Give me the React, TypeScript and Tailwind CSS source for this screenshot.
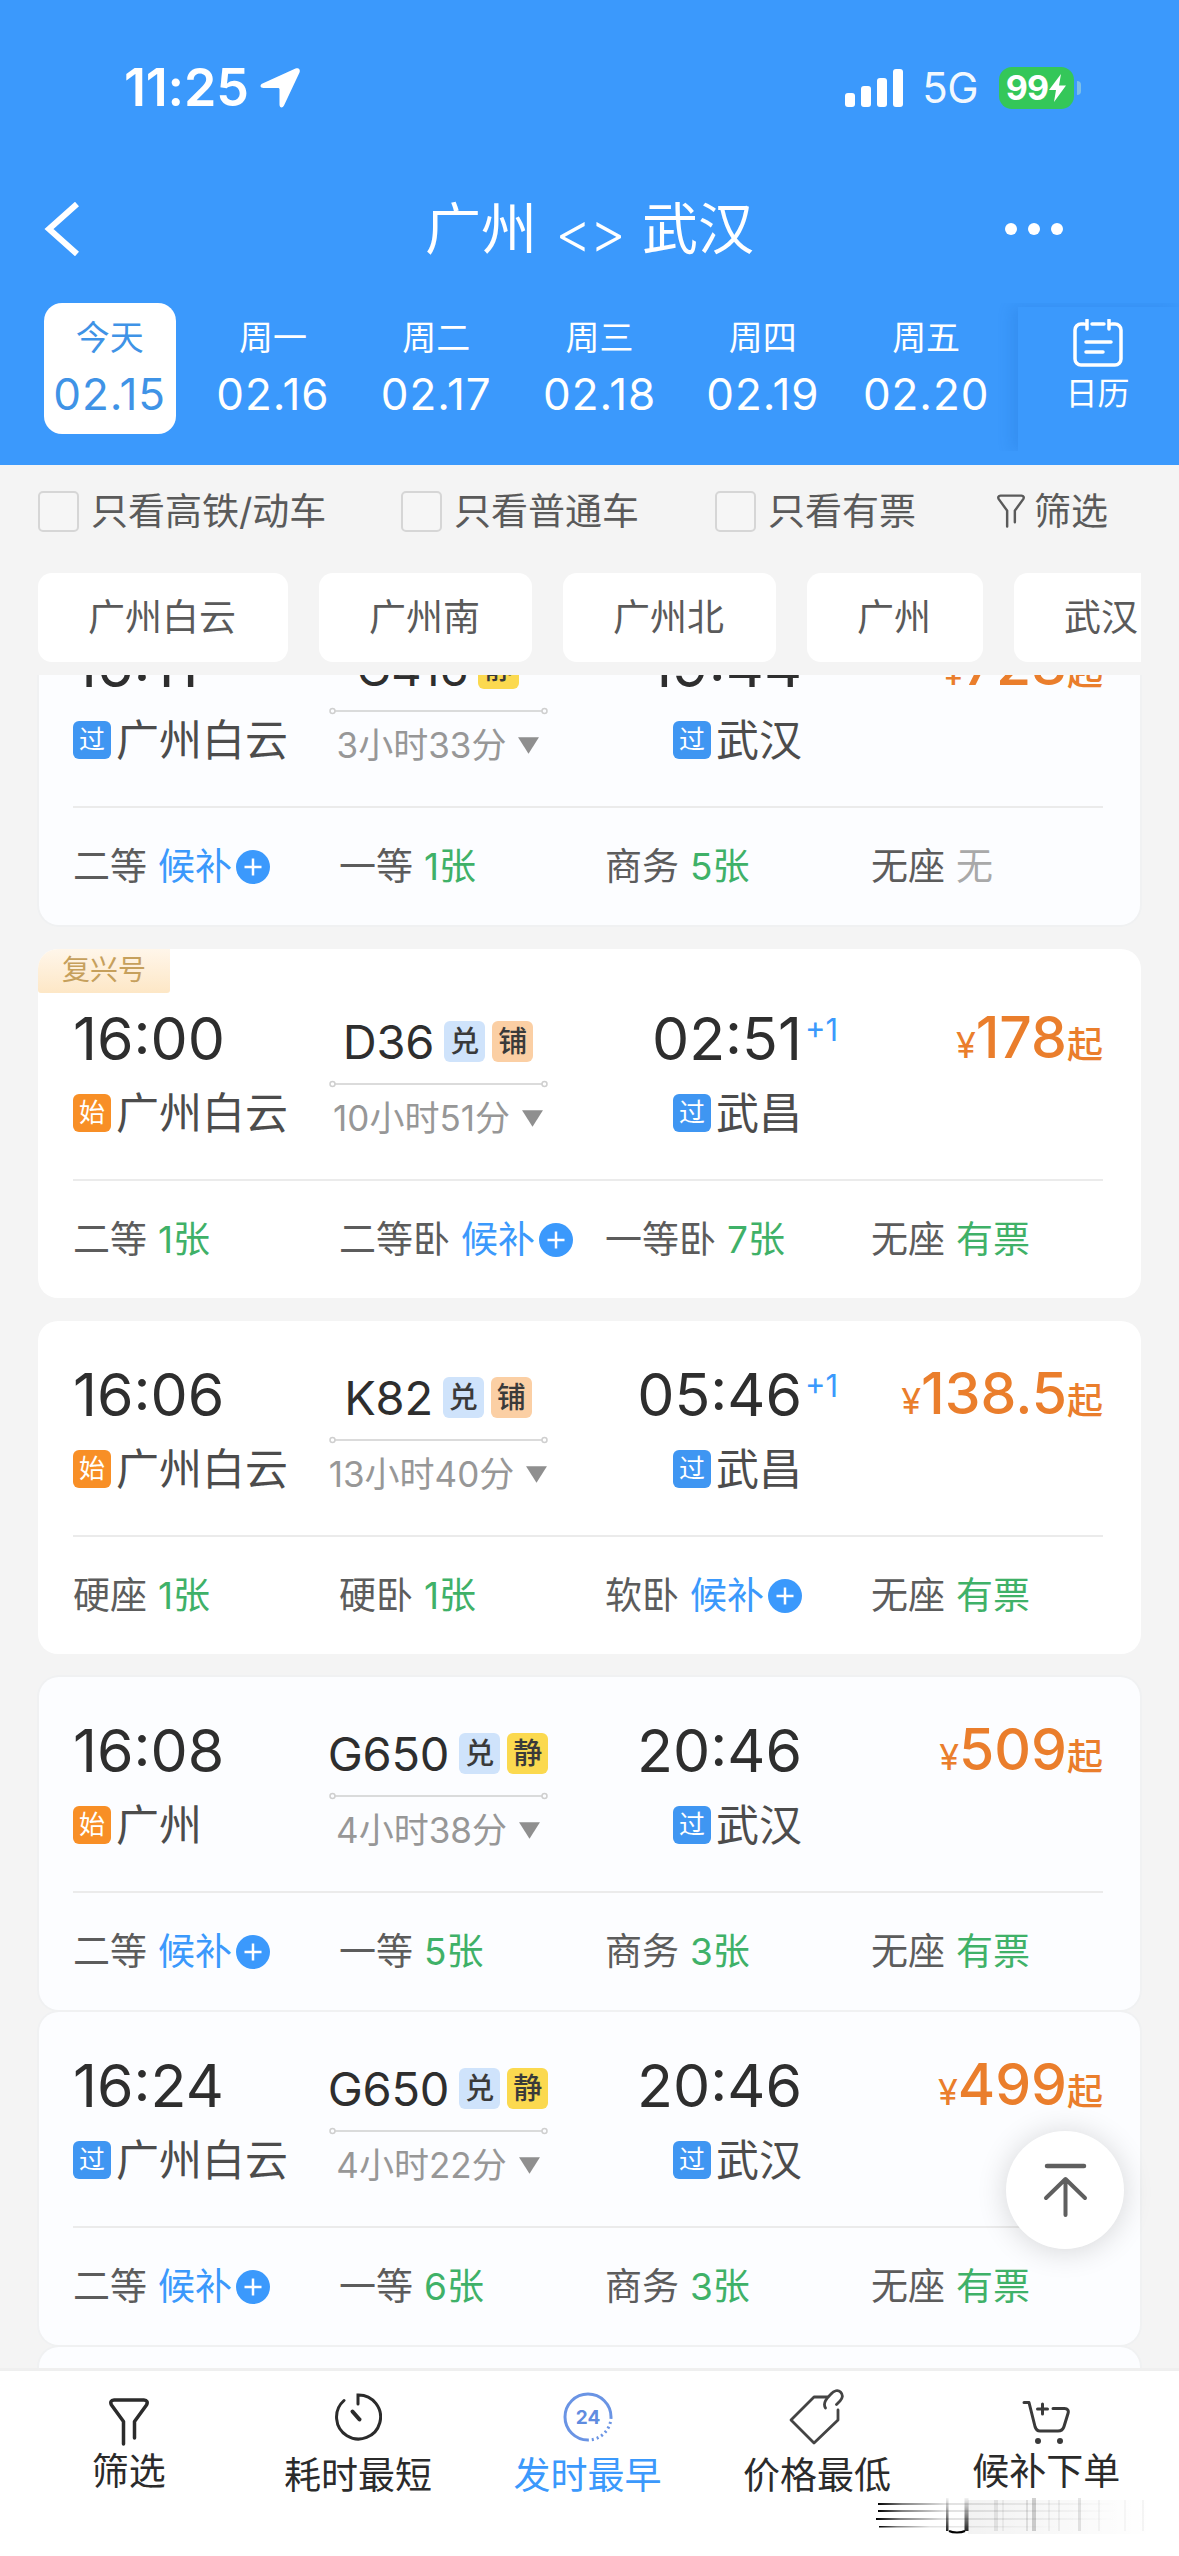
import type { ReactNode } from "react";
import clsx from "clsx";

type Tag = "兑" | "铺" | "静";

type Seat = { name: string; value: string };

type Train = {
  id: string;
  depart: string;
  arrive: string;
  nextDay?: boolean;
  from: string;
  to: string;
  origin?: boolean;
  code: string;
  tags: Tag[];
  duration: string;
  price: string;
  badge?: string;
  tinted?: boolean;
  gap: string;
  seats: Seat[];
};

const DATES = [
  { day: "今天", date: "02.15" },
  { day: "周一", date: "02.16" },
  { day: "周二", date: "02.17" },
  { day: "周三", date: "02.18" },
  { day: "周四", date: "02.19" },
  { day: "周五", date: "02.20" },
];

const STATIONS = ["广州白云", "广州南", "广州北", "广州", "武汉"];

const TRAINS: Train[] = [
  {
    id: "1",
    depart: "16:11",
    arrive: "19:44",
    from: "广州白云",
    to: "武汉",
    code: "G416",
    tags: ["静"],
    duration: "3小时33分",
    price: "728",
    tinted: true,
    gap: "-mt-[83px]",
    seats: [
      { name: "二等", value: "候补" },
      { name: "一等", value: "1张" },
      { name: "商务", value: "5张" },
      { name: "无座", value: "无" },
    ],
  },
  {
    id: "2",
    depart: "16:00",
    arrive: "02:51",
    nextDay: true,
    from: "广州白云",
    to: "武昌",
    origin: true,
    code: "D36",
    tags: ["兑", "铺"],
    duration: "10小时51分",
    price: "178",
    badge: "复兴号",
    gap: "mt-6",
    seats: [
      { name: "二等", value: "1张" },
      { name: "二等卧", value: "候补" },
      { name: "一等卧", value: "7张" },
      { name: "无座", value: "有票" },
    ],
  },
  {
    id: "3",
    depart: "16:06",
    arrive: "05:46",
    nextDay: true,
    from: "广州白云",
    to: "武昌",
    origin: true,
    code: "K82",
    tags: ["兑", "铺"],
    duration: "13小时40分",
    price: "138.5",
    gap: "mt-[23px]",
    seats: [
      { name: "硬座", value: "1张" },
      { name: "硬卧", value: "1张" },
      { name: "软卧", value: "候补" },
      { name: "无座", value: "有票" },
    ],
  },
  {
    id: "4",
    depart: "16:08",
    arrive: "20:46",
    from: "广州",
    to: "武汉",
    origin: true,
    code: "G650",
    tags: ["兑", "静"],
    duration: "4小时38分",
    price: "509",
    tinted: true,
    gap: "mt-[23px]",
    seats: [
      { name: "二等", value: "候补" },
      { name: "一等", value: "5张" },
      { name: "商务", value: "3张" },
      { name: "无座", value: "有票" },
    ],
  },
  {
    id: "5",
    depart: "16:24",
    arrive: "20:46",
    from: "广州白云",
    to: "武汉",
    code: "G650",
    tags: ["兑", "静"],
    duration: "4小时22分",
    price: "499",
    tinted: true,
    gap: "mt-0.5",
    seats: [
      { name: "二等", value: "候补" },
      { name: "一等", value: "6张" },
      { name: "商务", value: "3张" },
      { name: "无座", value: "有票" },
    ],
  },
];

const TAG_STYLES: Record<Tag, string> = {
  兑: "bg-[#cfe3fb]",
  铺: "bg-[#fbcfa4]",
  静: "bg-[#fbd94f]",
};

export default function App() {
  return (
    <div className="flex h-[2556px] w-[1179px] flex-col overflow-hidden bg-[#f4f4f4] font-['Inter','Noto_Sans_CJK_SC',sans-serif] leading-none">
      <header className="h-[465px] shrink-0 bg-[#3b99fc] text-white">
        <StatusBar />
        <TitleBar />
        <DateStrip />
      </header>
      <Filters />
      <main className="relative min-h-0 flex-1 overflow-hidden">
        <div className="px-[38px]">
          {TRAINS.map((train) => (
            <TrainCard key={train.id} train={train} />
          ))}
          <div className="mx-px mt-0.5 h-20 rounded-[20px] bg-[#fcfdff] ring-2 ring-[#f0f1f2]" />
        </div>
        <button className="absolute right-[55px] bottom-[119px] flex h-[118px] w-[118px] items-center justify-center rounded-full bg-white shadow-[0_2px_30px_rgba(0,0,0,0.16)]">
          <svg width="50" height="58" viewBox="0 0 50 58" fill="none" stroke="#5f5f5f" strokeWidth="4" strokeLinecap="round" strokeLinejoin="round">
            <path d="M7 5h37" strokeWidth="4.5" />
            <path d="M25.5 54V19M6 37L25.5 18 45 37" />
          </svg>
        </button>
      </main>
      <SortBar />
    </div>
  );
}

function StatusBar() {
  return (
    <div className="flex h-[176px] items-center pr-[98px] pl-[124px]">
      <span className="text-[52px] font-semibold tracking-[-0.2px]">11:25</span>
      <svg className="ml-2.5" width="42" height="42" viewBox="0 0 42 42">
        <path d="M39.5 1.5C41 2.5 41 4 40.5 5.500L25 38.500c-1.500 3-4.500 2.500-4.500-1V22.500c0-1-.5-1.500-1.500-1.500H4.500C1 21 .5 18 3.500 16.500L36.500 1.500c1-.5 2-.5 3 0z" fill="#fff" />
      </svg>
      <svg className="ml-auto" width="58" height="38" viewBox="0 0 58 38" fill="#fff">
        <rect x="0" y="24" width="10" height="14" rx="3" />
        <rect x="16" y="17" width="10" height="21" rx="3" />
        <rect x="32" y="9" width="10" height="29" rx="3" />
        <rect x="48" y="0" width="10" height="38" rx="3" />
      </svg>
      <span className="ml-[19px] text-[42px] tracking-[-0.5px] text-white/95">5G</span>
      <div className="ml-[21px] flex h-[42px] w-[75px] items-center justify-center rounded-[13px] bg-[#34c759]">
        <span className="text-[34px] font-bold tracking-tight">99</span>
        <svg width="19" height="28" viewBox="0 0 19 28">
          <path d="M13 0L1 16h7L6 28 18 11.500h-7z" fill="#fff" />
        </svg>
      </div>
      <span className="ml-[3px] h-3.5 w-1 rounded-r-full bg-[#7cc0e8]" />
    </div>
  );
}

function TitleBar() {
  return (
    <div className="flex h-[106px] items-center">
      <div className="w-[200px] pl-[44px]">
        <svg width="36" height="54" viewBox="0 0 36 54" fill="none" stroke="#fff" strokeWidth="6">
          <path d="M33 2L5 27l28 25" />
        </svg>
      </div>
      <h1 className="flex flex-1 items-center justify-center gap-[18px] text-[56px]">
        <span>广州</span>
        <span className="pt-2 text-[56px] font-light tracking-[-2px]">&lt;&gt;</span>
        <span>武汉</span>
      </h1>
      <div className="flex w-[200px] gap-[11px] pl-[26px]">
        <i className="size-3 rounded-full bg-white" />
        <i className="size-3 rounded-full bg-white" />
        <i className="size-3 rounded-full bg-white" />
      </div>
    </div>
  );
}

function DateStrip() {
  return (
    <div className="mt-[21px] flex h-[148px] overflow-hidden pl-7">
      {DATES.map(({ day, date }, i) => (
        <div key={date} className="flex w-[163.3px] shrink-0 justify-center">
          <div
            className={clsx(
              "flex h-[131px] w-[132px] flex-col items-center rounded-[18px] pt-[18px]",
              i === 0 && "bg-white text-[#3f93e6]",
            )}
          >
            <span className="text-[34px] leading-[34px]">{day}</span>
            <span className="mt-[17px] text-[44px] leading-[44px] tracking-[0.9px]">{date}</span>
          </div>
        </div>
      ))}
      <div className="mt-1 ml-[10px] flex flex-1 flex-col items-center bg-[#3b99fc] pt-3 shadow-[-6px_0_14px_rgba(20,90,180,0.16)]">
        <svg width="50" height="48" viewBox="0 0 50 48" fill="none" stroke="#fff" strokeWidth="3.5" strokeLinecap="round">
          <path d="M11 5H8a6 6 0 0 0-6 6v29a6 6 0 0 0 6 6h34a6 6 0 0 0 6-6V11a6 6 0 0 0-6-6h-3M19 5h12M14 1v9M36 1v9M13 23h25M13 33h17" />
        </svg>
        <span className="mt-[11px] pr-0.5 text-[32px]">日历</span>
      </div>
    </div>
  );
}

function Filters() {
  return (
    <section className="h-[210px] shrink-0 text-[37px] text-[#5a5a5a]">
      <div className="flex h-[92px] items-center pl-[38px]">
        <Check label="只看高铁/动车" className="w-[363px]" />
        <Check label="只看普通车" className="w-[314px]" />
        <Check label="只看有票" className="w-[282px]" />
        <Funnel className="h-[34px] w-[28px]" />
        <span className="ml-[9px]">筛选</span>
      </div>
      <div className="mt-4 ml-[38px] flex w-[1103px] gap-[31px] overflow-hidden">
        {STATIONS.map((name) => (
          <span key={name} className="flex h-[89px] shrink-0 items-center rounded-[14px] bg-white pr-[52px] pl-[50px] whitespace-nowrap">
            {name}
          </span>
        ))}
      </div>
    </section>
  );
}

function Check({ label, className }: { label: string; className: string }) {
  return (
    <label className={clsx("flex shrink-0 items-center gap-3 whitespace-nowrap", className)}>
      <span className="size-[41px] rounded-[5px] border-2 border-[#d6d6d6] bg-[#f6f6f6]" />
      {label}
    </label>
  );
}

function Funnel({ className }: { className: string }) {
  return (
    <svg className={className} viewBox="0 0 40 48" fill="none" stroke="currentColor" strokeWidth="3.5" strokeLinecap="round" strokeLinejoin="round">
      <path d="M14.5 46V23.500L2.500 7C1 4.500 2 2 5 2h30c3 0 4 2.500 2.500 5L25.500 23.500V40" />
    </svg>
  );
}

/* ------------------------------------------------------------------ */
/*  Train list                                                         */
/* ------------------------------------------------------------------ */

function TrainCard({ train }: { train: Train }) {
  return (
    <article
      className={clsx(
        "overflow-hidden rounded-[20px]",
        train.gap,
        train.tinted ? "mx-px bg-[#fcfdff] pr-[37px] pl-[34px] ring-2 ring-[#f0f1f2]" : "bg-white pr-[38px] pl-[35px]",
      )}
    >
      {train.badge ? (
        <div className="-ml-[35px] flex h-11 w-[132px] items-center justify-center rounded-b-[3px] bg-linear-to-b from-[#fff6ea] to-[#fde7c6] pb-0.5 text-[28px] text-[#c6a05c]">
          {train.badge}
        </div>
      ) : null}
      <div className={clsx("flex h-[170px]", train.badge ? "mt-4" : "mt-11")}>
        <div className="w-[257px] shrink-0 whitespace-nowrap">
          <div className="text-[59px] leading-[60px] text-[#2e2e2e]">{train.depart}</div>
          <Station name={train.from} origin={train.origin} />
        </div>
        <div className="flex w-[219px] shrink-0 flex-col items-center whitespace-nowrap">
          <div className="mt-2.5 flex h-11 items-center pr-[3px]">
            <span className="mr-2.5 text-[47px] tracking-[-0.2px] text-[#2e2e2e]">{train.code}</span>
            <span className="flex gap-[7px]">
              {train.tags.map((tag) => (
                <span
                  key={tag}
                  className={clsx(
                    "flex size-[41px] items-center justify-center rounded-md text-[29px] font-medium text-[#3a3a3a]",
                    TAG_STYLES[tag],
                  )}
                >
                  {tag}
                </span>
              ))}
            </span>
          </div>
          <svg className="mt-[17px] -ml-0.5 shrink-0" width="219" height="8" viewBox="0 0 219 8" fill="none" stroke="#cfcfcf" strokeWidth="1.5">
            <circle cx="3.5" cy="4" r="2.5" />
            <circle cx="215.5" cy="4" r="2.5" />
            <path d="M6 4h207" />
          </svg>
          <div className="mt-3 flex h-9 items-center gap-[11px] pr-0.5 text-[35px] text-[#979797]">
            {train.duration}
            <svg width="23" height="17" viewBox="0 0 22 16">
              <path d="M1 0h20L11 16z" fill="#8f8f8f" />
            </svg>
          </div>
        </div>
        <div className="flex w-[253px] shrink-0 flex-col items-end whitespace-nowrap">
          <div className="relative text-[59px] leading-[60px] text-[#2e2e2e]">
            {train.arrive}
            {train.nextDay ? (
              <sup className="absolute top-[5px] left-full ml-[3px] text-[31px] leading-[31px] text-[#3b99fc]">+1</sup>
            ) : null}
          </div>
          <Station name={train.to} />
        </div>
        <div className="flex flex-1 items-baseline justify-end pt-px text-[#ea7e2c]">
          <span className="text-[36px]">¥</span>
          <span className="text-[57px] leading-[56px] font-medium">{train.price}</span>
          <span className="text-[36px] font-medium">起</span>
        </div>
      </div>
      <div className="h-0.5 bg-[#ebebeb]" />
      <div className="flex h-[117px] items-center text-[37px] whitespace-nowrap">
        {train.seats.map((seat) => (
          <SeatCell key={seat.name} seat={seat} />
        ))}
      </div>
    </article>
  );
}

function Station({ name, origin }: { name: string; origin?: boolean }) {
  return (
    <div className="mt-[22px] flex h-11 items-center text-[43px] text-[#4c4c4c]">
      <span
        className={clsx(
          "mr-[5px] flex size-[38px] items-center justify-center rounded-md text-[26px] text-white",
          origin ? "bg-[#f88f26]" : "bg-[#3f96f2]",
        )}
      >
        {origin ? "始" : "过"}
      </span>
      {name}
    </div>
  );
}

function SeatCell({ seat }: { seat: Seat }) {
  const waitlist = seat.value === "候补";
  return (
    <div className="flex w-[266px] shrink-0 items-center text-[#5c5c5c]">
      {seat.name}
      <span
        className={clsx(
          "ml-[11px]",
          waitlist && "text-[#3b99fc]",
          seat.value === "无" && "text-[#a9a9a9]",
          !waitlist && seat.value !== "无" && "text-[#3fb168]",
        )}
      >
        {seat.value}
      </span>
      {waitlist ? (
        <svg className="ml-1" width="34" height="34" viewBox="0 0 34 34">
          <circle cx="17" cy="17" r="17" fill="#3b99fc" />
          <path d="M17 8.500v17M8.500 17h17" stroke="#fff" strokeWidth="2.5" />
        </svg>
      ) : null}
    </div>
  );
}

/* ------------------------------------------------------------------ */
/*  Bottom sort bar                                                    */
/* ------------------------------------------------------------------ */

function SortBar() {
  return (
    <footer className="h-[188px] shrink-0 border-t-[3px] border-[#efefef] bg-white">
      <nav className="flex h-[127px] pr-[18px] pl-3.5 text-[37px] text-[#2b2b2b]">
        <SortItem label="筛选" raised>
          <Funnel className="h-[48px] w-10" />
        </SortItem>
        <SortItem label="耗时最短">
          <svg width="48" height="52" viewBox="0 0 48 52" fill="none" stroke="currentColor" strokeWidth="3" strokeLinecap="round">
            <path d="M24 13V4a22 22 0 1 1-14 5.500" />
            <path d="M18.500 20.500l7 8" strokeWidth="4" />
          </svg>
        </SortItem>
        <SortItem label="发时最早" active>
          <svg width="50" height="50" viewBox="0 0 50 50" fill="none" stroke="#6a94e4" strokeWidth="3">
            <path d="M25 48A23 23 0 1 1 48 25" />
            <path d="M48 25A23 23 0 0 1 25 48" strokeDasharray="2 3" />
            <text x="25" y="32" textAnchor="middle" fontSize="19" fontWeight="700" fill="#5f8ce0" stroke="none">
              24
            </text>
          </svg>
        </SortItem>
        <SortItem label="价格最低">
          <svg width="56" height="56" viewBox="0 0 56 56" fill="none" stroke="#444" strokeWidth="2.8" strokeLinecap="round" strokeLinejoin="round">
            <path d="M38 8H25L2 31l23 23 24-23V21" />
            <path d="M36.500 19c-3-5 1-9.500 5.500-14 3-3.500 7-4.500 9.500-2 3 3 2 6.500-.5 9l-3.500 3.500" />
          </svg>
        </SortItem>
        <SortItem label="候补下单" raised>
          <svg width="48" height="46" viewBox="0 0 48 46" fill="none" stroke="#3a3a3a" strokeWidth="3" strokeLinecap="round" strokeLinejoin="round">
            <path d="M2 2.500h5l6 24c1 3.500 2.500 4.500 5 4.500h18c3 0 5-1 6-4.500l4-13c1-3-.5-5-3.500-5H31M20.500 4v10M15.500 9h10" />
            <circle cx="16" cy="41" r="3" fill="#3a3a3a" stroke="none" />
            <circle cx="38" cy="41" r="3" fill="#3a3a3a" stroke="none" />
          </svg>
        </SortItem>
      </nav>
      <Streaks />
    </footer>
  );
}

function SortItem({
  label,
  active,
  raised,
  children,
}: {
  label: string;
  active?: boolean;
  raised?: boolean;
  children: ReactNode;
}) {
  return (
    <div className={clsx("flex flex-1 flex-col items-center", active && "text-[#3b99fc]", raised ? "pt-1" : "pt-2")}>
      <span className={clsx("flex h-[77px] justify-center", raised ? "items-end pb-1.5" : "items-center pb-0.5")}>{children}</span>
      <span className="leading-[40px]">{label}</span>
    </div>
  );
}

function Streaks() {
  return (
    <svg className="ml-[876px]" width="280" height="38" viewBox="0 0 280 38">
      <defs>
        <linearGradient id="fadeX">
          <stop offset="0" stopColor="#000" />
          <stop offset="0.1" stopColor="#000" stopOpacity="0.5" />
          <stop offset="0.28" stopColor="#000" stopOpacity="0.12" />
          <stop offset="1" stopColor="#000" stopOpacity="0" />
        </linearGradient>
        <linearGradient id="fadeY" x1="0" y1="0" x2="0" y2="1">
          <stop offset="0" stopColor="#000" stopOpacity="0.05" />
          <stop offset="1" stopColor="#000" stopOpacity="0.85" />
        </linearGradient>
        <linearGradient id="wash">
          <stop offset="0" stopColor="#000" stopOpacity="0.05" />
          <stop offset="1" stopColor="#000" stopOpacity="0" />
        </linearGradient>
      </defs>
      <rect x="92" y="2" width="185" height="34" fill="url(#wash)" />
      <g fill="url(#fadeX)">
        <rect x="2" y="5" width="240" height="2" />
        <rect x="2" y="12" width="240" height="2" />
        <rect x="0" y="20" width="240" height="2" />
        <rect x="3" y="28" width="180" height="1.5" />
      </g>
      <rect x="70" y="0" width="2.5" height="33" fill="url(#fadeY)" />
      <rect x="88.5" y="0" width="4" height="33" fill="url(#fadeY)" />
      <path d="M73 33c4 2 12 2 16 0" stroke="#000" strokeWidth="2" fill="none" />
      <g fill="#000">
        <rect x="118" y="2" width="4" height="31" opacity="0.08" />
        <rect x="126" y="2" width="2" height="31" opacity="0.05" />
        <rect x="150" y="2" width="2" height="31" opacity="0.1" />
        <rect x="156" y="0" width="4" height="33" opacity="0.18" />
        <rect x="172" y="2" width="2" height="31" opacity="0.05" />
        <rect x="182" y="2" width="2" height="31" opacity="0.06" />
        <rect x="202" y="0" width="3" height="33" opacity="0.1" />
        <rect x="222" y="2" width="2" height="31" opacity="0.04" />
        <rect x="248" y="2" width="2" height="31" opacity="0.03" />
        <rect x="266" y="2" width="2" height="31" opacity="0.04" />
      </g>
    </svg>
  );
}
